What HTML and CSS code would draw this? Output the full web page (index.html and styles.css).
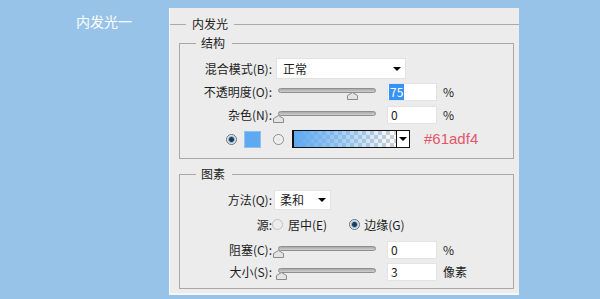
FILE: index.html
```html
<!DOCTYPE html>
<html lang="zh-CN">
<head>
    <meta charset="UTF-8">
    <title>内发光</title>
    <link rel="stylesheet" href="styles.css">
</head>
<body>
<div class="page">
    <div class="title">内发光一</div>
    <div class="panel">
        <fieldset class="group">
            <legend>内发光</legend>
            <fieldset class="box box-structure">
                <legend>结构</legend>
                <div class="row row-blend">
                    <span class="lbl">混合模式(B):</span>
                    <div class="select select-blend"><span>正常</span><i class="caret"></i></div>
                </div>
                <div class="row">
                    <span class="lbl">不透明度(O):</span>
                    <div class="slider">
                        <div class="track"></div>
                        <svg class="thumb" style="left:75%" width="11" height="8" viewBox="0 0 11 8"><polygon points="0.5,3.5 5.5,0.5 10.5,3.5 10.5,7.5 0.5,7.5" fill="#e4e4e4" stroke="#8a8a8a"/></svg>
                    </div>
                    <div class="field"><span class="sel">75</span></div>
                    <span class="unit">%</span>
                </div>
                <div class="row">
                    <span class="lbl">杂色(N):</span>
                    <div class="slider">
                        <div class="track"></div>
                        <svg class="thumb" style="left:0%" width="11" height="8" viewBox="0 0 11 8"><polygon points="0.5,3.5 5.5,0.5 10.5,3.5 10.5,7.5 0.5,7.5" fill="#e4e4e4" stroke="#8a8a8a"/></svg>
                    </div>
                    <div class="field">0</div>
                    <span class="unit">%</span>
                </div>
                <div class="row row-color">
                    <i class="radio checked"></i>
                    <i class="swatch"></i>
                    <i class="radio"></i>
                    <div class="gradient">
                        <div class="gradient-fill"></div>
                        <div class="gradient-btn"><i class="caret"></i></div>
                    </div>
                    <span class="hex">#61adf4</span>
                </div>
            </fieldset>
            <fieldset class="box box-elements">
                <legend>图素</legend>
                <div class="row">
                    <span class="lbl">方法(Q):</span>
                    <div class="select select-method"><span>柔和</span><i class="caret"></i></div>
                </div>
                <div class="row row-source">
                    <span class="lbl">源:</span>
                    <i class="radio faint"></i>
                    <span class="opt">居中(E)</span>
                    <i class="radio checked"></i>
                    <span class="opt">边缘(G)</span>
                </div>
                <div class="row">
                    <span class="lbl">阻塞(C):</span>
                    <div class="slider">
                        <div class="track"></div>
                        <svg class="thumb" style="left:0%" width="11" height="8" viewBox="0 0 11 8"><polygon points="0.5,3.5 5.5,0.5 10.5,3.5 10.5,7.5 0.5,7.5" fill="#e4e4e4" stroke="#8a8a8a"/></svg>
                    </div>
                    <div class="field">0</div>
                    <span class="unit">%</span>
                </div>
                <div class="row row-size">
                    <span class="lbl">大小(S):</span>
                    <div class="slider">
                        <div class="track"></div>
                        <svg class="thumb" style="left:3%" width="11" height="8" viewBox="0 0 11 8"><polygon points="0.5,3.5 5.5,0.5 10.5,3.5 10.5,7.5 0.5,7.5" fill="#e4e4e4" stroke="#8a8a8a"/></svg>
                    </div>
                    <div class="field">3</div>
                    <span class="unit">像素</span>
                </div>
            </fieldset>
        </fieldset>
    </div>
</div>
</body>
</html>
```

FILE: styles.css
```css
*{
    margin: 0;
    padding: 0;
    box-sizing: border-box;
}
body{
    background: #97c3e8;
    font: 12px/16px "Noto Sans CJK SC", sans-serif;
    color: #1c1c1c;
}
.page{
    display: flex;
    height: 299px;
    padding-left: 76px;
}
.title{
    width: 93px;
    margin-top: 13px;
    font-size: 14px;
    line-height: 16px;
    color: #fff;
}
.panel{
    width: 350px;
    height: 287px;
    margin-top: 8px;
    padding-top: 8px;
    background: #ececec;
    border-left: 1px solid #f8f8f8;
    border-bottom: 2px solid #f6f6f6;
}
fieldset{
    margin: 0;
    padding: 0;
    border: 0;
    min-width: 0;
}
legend{
    line-height: 16px;
}
.group{
    border-top: 1px solid #aaa;
    padding: 3px 0 0 9px;
}
.group > legend{
    margin-left: 7px;
    padding: 0 6px;
}
.box{
    width: 335px;
    border: 1px solid #a8a8a8;
    padding: 6px 0 6px;
}
.box > legend{
    margin-left: 16px;
    padding: 0 7px 0 5px;
}
.box-elements{
    margin-top: 7px;
    padding-bottom: 5px;
}
.row{
    display: flex;
    align-items: center;
    height: 23px;
}
.row-color{
    height: 26px;
    padding-left: 46px;
}
.row-source{
    height: 27px;
}
.row-size{
    height: 22px;
}
.lbl{
    flex: none;
    width: 92px;
    margin-right: 4px;
    text-align: right;
    white-space: nowrap;
}
.row-source .lbl{
    margin-right: 0;
}

/* 下拉框 */
.select{
    display: flex;
    align-items: center;
    justify-content: space-between;
    height: 21px;
    padding: 0 4px 0 6px;
    background: #fff;
    border: 1px solid #e2e2e2;
}
.select-blend{
    width: 130px;
}
.select-method{
    width: 57px;
    height: 20px;
    margin-left: -2px;
    padding-left: 5px;
}
.caret{
    width: 0;
    height: 0;
    border-left: 4px solid transparent;
    border-right: 4px solid transparent;
    border-top: 4px solid #000;
}

/* 滑块 */
.slider{
    position: relative;
    flex: none;
    width: 98px;
    height: 16px;
    margin: 0 11px 0 2px;
}
.track{
    margin-top: 4px;
    height: 5px;
    border: 1px solid #8f8f8f;
    border-radius: 3px;
    background: linear-gradient(#a9a9a9, #d0d0d0);
}
.thumb{
    position: absolute;
    top: 8px;
    margin-left: -5px;
}
.field{
    flex: none;
    width: 50px;
    height: 18px;
    padding-left: 3px;
    line-height: 16px;
    background: #fff;
    border: 1px solid #e3e3e3;
    margin-right: 6px;
}
.sel{
    display: inline-block;
    margin-left: -2px;
    padding: 0 1px;
    background: #3592f6;
    color: #fff;
}

/* 单选 */
.radio{
    flex: none;
    width: 11px;
    height: 11px;
    border-radius: 50%;
    border: 1px solid #8c8c8c;
    background: radial-gradient(circle, #e4e4e4 0, #f7f7f7 5px);
}
.radio.checked{
    border-color: #6f6f6f;
    background: radial-gradient(circle, #1f3b55 0 2px, #5a8db8 2.6px, #b9d8ef 3.4px, #f2f2f2 4.4px);
}
.radio.faint{
    border-color: #c2c2c2;
    background: #ededed;
}
.row-source .opt{
    margin: 0 22px 0 5px;
}
.row-source .opt:last-child{
    margin: 0 0 0 4px;
}

/* 颜色 */
.swatch{
    width: 17px;
    height: 17px;
    margin: 0 12px 0 7px;
    background: #5ea9f0;
    border: 1px solid #8fc2ee;
}
.gradient{
    display: flex;
    width: 118px;
    height: 18px;
    margin-left: 8px;
    border: 1px solid #111;
    border-left-width: 2px;
}
.gradient-fill{
    flex: 1;
    background:
        linear-gradient(to right, #5ea9f0, rgba(97, 173, 244, 0.6) 45%, rgba(97, 173, 244, 0)),
        repeating-conic-gradient(#cfcfcf 0 25%, #fff 0 50%) 0 0/8px 8px;
}
.gradient-btn{
    display: flex;
    align-items: center;
    justify-content: center;
    width: 13px;
    background: #fff;
    border-left: 1px solid #111;
}
.hex{
    margin-left: 14px;
    font: 15px/18px "Liberation Sans", sans-serif;
    color: #e2566a;
}
```
